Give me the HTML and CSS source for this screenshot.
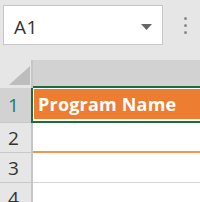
FILE: index.html
```html
<!DOCTYPE html>
<html>
<head>
<meta charset="utf-8">
<link rel="stylesheet" href="styles.css">
</head>
<body>
<div class="toolbar">
  <div class="namebox">
    <span class="ref">A1</span>
    <svg class="caret" width="11" height="6" viewBox="0 0 11 6"><path d="M0 0H11L5.5 6Z" fill="#666"/></svg>
  </div>
  <div class="dots"><span></span><span></span><span></span></div>
</div>
<div class="sheet">
  <div class="corner"><svg width="21" height="19" viewBox="0 0 21 19"><path d="M21 0V19H0Z" fill="#bdbdbd"/></svg></div>
  <div class="colhead sel"></div>
  <div class="rowhead sel">1</div>
  <div class="cell active"><div class="fill">Program Name</div></div>
  <div class="rowhead">2</div>
  <div class="cell orange-bottom"></div>
  <div class="rowhead">3</div>
  <div class="cell"></div>
  <div class="rowhead">4</div>
  <div class="cell"></div>
</div>
</body>
</html>
```
FILE: styles.css
```css
html, body {
  margin: 0;
  padding: 0;
  background: #fff;
  width: 200px;
  height: 202px;
  overflow: hidden;
  font-family: "Open Sans", "Liberation Sans", sans-serif;
}
.toolbar {
  height: 60px;
  box-sizing: border-box;
  background: #e6e6e6;
  display: flex;
  align-items: flex-start;
  padding: 5px 0 0 3px;
}
.namebox {
  width: 160px;
  height: 40px;
  box-sizing: border-box;
  border: 1px solid #c6c6c6;
  background: #fff;
  display: flex;
  align-items: center;
  justify-content: space-between;
  padding: 3px 10px 0 10px;
}
.ref {
  font-size: 19px;
  color: #333;
  letter-spacing: 0.5px;
}
.caret {
  display: block;
}
.dots {
  display: flex;
  flex-direction: column;
  gap: 4px;
  margin: 12px 0 0 21px;
}
.dots span {
  width: 3px;
  height: 3px;
  border-radius: 50%;
  background: #8a8a8a;
}
.sheet {
  display: grid;
  grid-template-columns: 33px 1fr;
  grid-template-rows: 28px 35px 30px 30px 30px;
}
.corner {
  background: #e6e6e6;
  border-right: 2px solid #c6c6c6;
  display: flex;
  align-items: flex-end;
  justify-content: flex-end;
  padding: 0 1px 3px 0;
}
.corner svg { display: block; }
.colhead {
  background: #d2d2d2;
  border-bottom: 2px solid #1e6b3c;
}
.rowhead {
  background: #e6e6e6;
  border-right: 2px solid #c6c6c6;
  border-bottom: 1px solid #c8c8c8;
  display: flex;
  align-items: center;
  justify-content: center;
  font-size: 19px;
  color: #333;
  padding-right: 4px;
}
.rowhead.sel {
  background: #d2d2d2;
  color: #1b7a6e;
  border-right-color: #a9a9a9;
}
.cell {
  border-bottom: 1px solid #d4d4d4;
  background: #fff;
}
.cell.orange-bottom {
  border-bottom: 2px solid #f29550;
}
.cell.active {
  margin-left: -2px;
  border: 2px solid #1e6b3c;
  border-right: none;
  border-top: none;
  padding: 1px 0 2px 1px;
}
.fill {
  height: 100%;
  background: #ed7d31;
  color: #fff;
  font-weight: bold;
  font-size: 18px;
  display: flex;
  align-items: center;
  padding-left: 4px;
  letter-spacing: 0.2px;
}
```
